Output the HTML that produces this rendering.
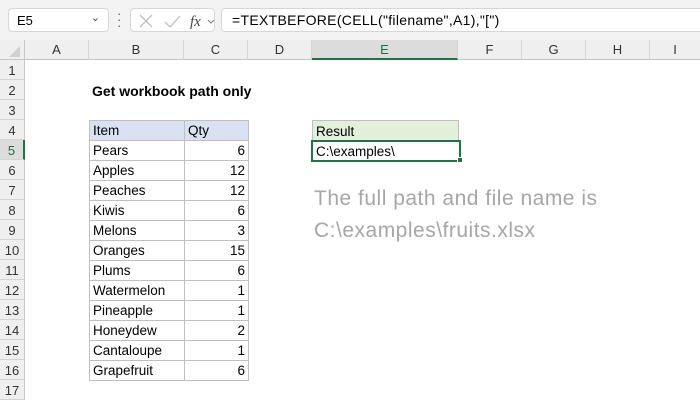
<!DOCTYPE html>
<html><head><style>
*{margin:0;padding:0;box-sizing:border-box}
body{width:700px;height:400px;overflow:hidden;background:#fff;font-family:"Liberation Sans",Calibri,sans-serif;font-size:13px;color:#000;position:relative}
.a{position:absolute}
.top{left:0;top:0;width:700px;height:40px;background:#f3f3f3}
.box{background:#fff;border:1px solid #d6d6d6;border-radius:4px;height:24px;top:8px}
.hdr{left:0;top:40px;width:700px;height:20px;background:#efefef;border-bottom:1px solid #c6c6c6}
.ch{top:40px;height:20px;line-height:20px;text-align:center;color:#333;font-size:13px;border-right:1px solid #d4d4d4}
.rh{left:0;width:25px;height:20px;line-height:21px;text-align:center;color:#333;background:#efefef;border-bottom:1px solid #d4d4d4;border-right:1px solid #c6c6c6;font-size:13px}
table{position:absolute;left:89px;top:120px;border-collapse:collapse}
td{height:20px;border:1px solid #bfbfbf;padding:1px 3px 0;font-size:13.5px;line-height:18px}
td.n{text-align:right}
.note{color:#a6a6a6;font-size:21px;left:314px;letter-spacing:.5px}
</style></head><body>
<div class="a top"></div>
<div class="a box" style="left:8px;width:101px;padding:4px 8px;font-size:13px">E5<span class="a" style="right:8px;top:2px;font-size:11px;color:#444">&#8964;</span></div>
<div class="a" style="left:117px;top:11px;color:#555;font-size:13px;line-height:6px">·<br>·<br>·</div>
<div class="a box" style="left:130px;width:85px">
<svg class="a" style="left:6px;top:4px" width="80" height="16"><path d="M3 2L15 14M15 2L3 14" stroke="#c0c0c0" stroke-width="1.3" fill="none"/><path d="M28 9L33 14L43 3" stroke="#c0c0c0" stroke-width="1.3" fill="none"/><text x="53" y="13" font-family="Liberation Serif" font-style="italic" font-size="15" fill="#444">fx</text><path d="M71 7L74 10L77 7" stroke="#777" fill="none"/></svg></div>
<div class="a box" style="left:221px;width:490px;padding:3px 10px;font-size:14px;letter-spacing:.3px">=TEXTBEFORE(CELL("filename",A1),"[")</div>
<div class="a hdr"></div>
<div class="a" style="left:0;top:40px;width:25px;height:20px;border-right:1px solid #c6c6c6"><svg width="24" height="20"><path d="M20 6L20 17L9 17Z" fill="#d0d0d0"/></svg></div>
<div class="a ch" style="left:25px;width:64px">A</div>
<div class="a ch" style="left:89px;width:95px">B</div>
<div class="a ch" style="left:184px;width:64px">C</div>
<div class="a ch" style="left:248px;width:64px">D</div>
<div class="a ch" style="left:312px;width:146px;background:#dcdcdc;color:#1e6e40;border-bottom:2px solid #217346">E</div>
<div class="a ch" style="left:458px;width:64px">F</div>
<div class="a ch" style="left:522px;width:64px">G</div>
<div class="a ch" style="left:586px;width:64px">H</div>
<div class="a ch" style="left:650px;width:50px;border:none">I</div>
<div class="a rh" style="top:60px">1</div>
<div class="a rh" style="top:80px">2</div>
<div class="a rh" style="top:100px">3</div>
<div class="a rh" style="top:120px">4</div>
<div class="a rh" style="top:140px;background:#dcdcdc;color:#1e6e40;border-right:2px solid #217346">5</div>
<div class="a rh" style="top:160px">6</div>
<div class="a rh" style="top:180px">7</div>
<div class="a rh" style="top:200px">8</div>
<div class="a rh" style="top:220px">9</div>
<div class="a rh" style="top:240px">10</div>
<div class="a rh" style="top:260px">11</div>
<div class="a rh" style="top:280px">12</div>
<div class="a rh" style="top:300px">13</div>
<div class="a rh" style="top:320px">14</div>
<div class="a rh" style="top:340px">15</div>
<div class="a rh" style="top:360px">16</div>
<div class="a rh" style="top:380px">17</div>
<div class="a" style="left:92px;top:83px;font-weight:bold;font-size:14px">Get workbook path only</div>
<table>
<tr style="background:#d9e1f2"><td style="width:95px">Item</td><td style="width:64px">Qty</td></tr>
<tr><td>Pears</td><td class="n">6</td></tr>
<tr><td>Apples</td><td class="n">12</td></tr>
<tr><td>Peaches</td><td class="n">12</td></tr>
<tr><td>Kiwis</td><td class="n">6</td></tr>
<tr><td>Melons</td><td class="n">3</td></tr>
<tr><td>Oranges</td><td class="n">15</td></tr>
<tr><td>Plums</td><td class="n">6</td></tr>
<tr><td>Watermelon</td><td class="n">1</td></tr>
<tr><td>Pineapple</td><td class="n">1</td></tr>
<tr><td>Honeydew</td><td class="n">2</td></tr>
<tr><td>Cantaloupe</td><td class="n">1</td></tr>
<tr><td>Grapefruit</td><td class="n">6</td></tr>
</table>
<div class="a" style="left:312px;top:120px;width:147px;height:21px;background:#e2efda;border:1px solid #bfbfbf;padding:1px 3px 0;line-height:19px;font-size:13.5px">Result</div>
<div class="a" style="left:311px;top:140px;width:150px;height:22px;border:2px solid #217346;padding:1px 3px 0;line-height:18px;font-size:13.5px">C:\examples\</div>
<div class="a" style="left:457px;top:157px;width:6px;height:6px;background:#217346;border:1px solid #fff"></div>
<div class="a note" style="top:187px">The full path and file name is</div>
<div class="a note" style="top:219px">C:\examples\fruits.xlsx</div>
</body></html>
